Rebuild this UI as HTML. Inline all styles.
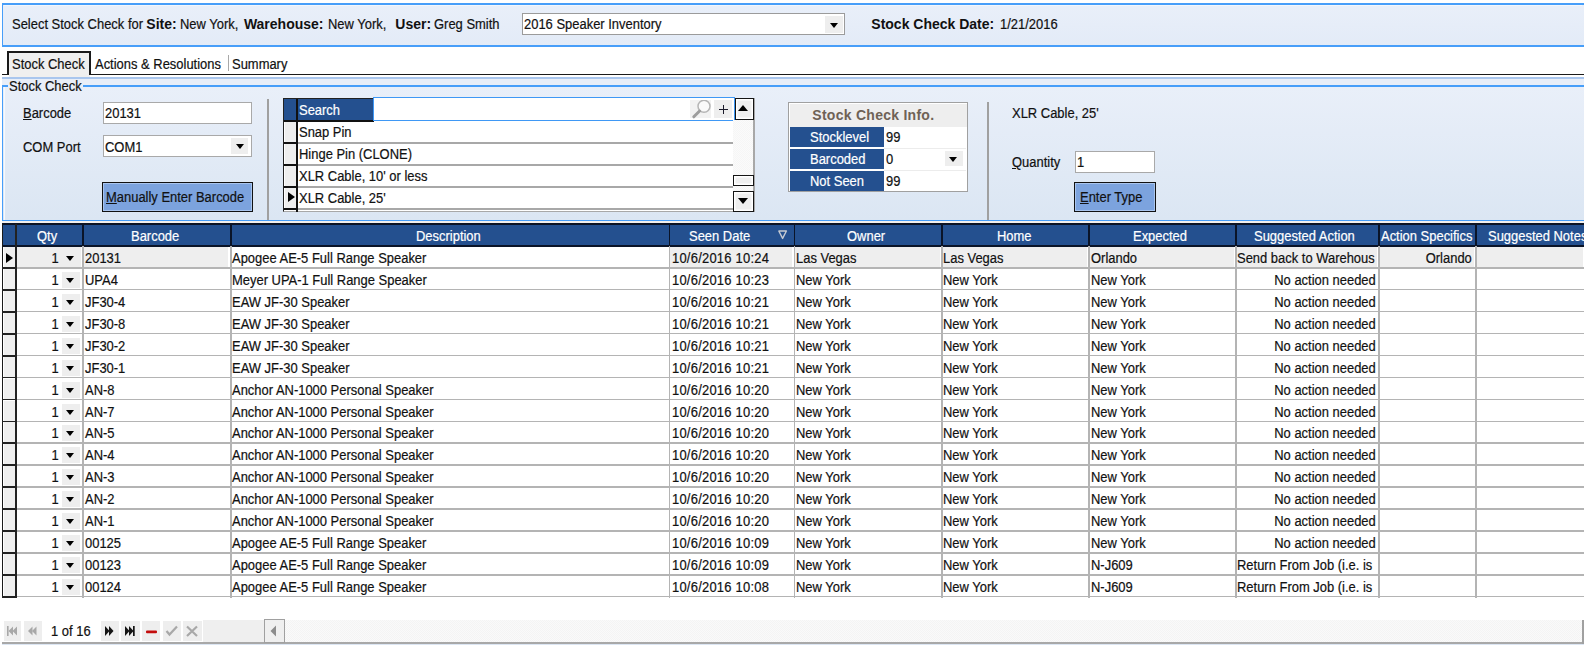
<!DOCTYPE html>
<html><head><meta charset="utf-8"><style>
*{margin:0;padding:0}
html,body{width:1586px;height:647px;overflow:hidden;background:#fff}
body>div,body>svg{position:absolute}
body{position:relative;font-family:"Liberation Sans",sans-serif;font-size:13px;color:#111}
.t,.tb{position:absolute;white-space:nowrap;line-height:15px;font-size:14px;-webkit-text-stroke-width:0.2px}
.t{transform:scaleX(0.925);transform-origin:0 0}
.t.r{transform-origin:100% 0}
.tb{font-weight:bold;font-size:14px;-webkit-text-stroke-width:0}
.u1::first-letter{text-decoration:underline}
</style></head><body>
<div style="left:2px;top:2.8px;width:1582px;height:44.5px;border:2px solid #479ef9;border-right:none;border-left-width:1.5px;box-sizing:border-box;background:linear-gradient(#e9eff9,#e3ebf7);"></div>
<div style="left:4px;top:5px;width:1578px;height:1px;background:#f4f7fc"></div>
<div class="t" style="left:11.9px;top:17px;">Select Stock Check for</div>
<div class="tb" style="left:146.3px;top:17px;">Site:</div>
<div class="t" style="left:180.3px;top:17px;">New York,</div>
<div class="tb" style="left:243.9px;top:17px;">Warehouse:</div>
<div class="t" style="left:328.3px;top:17px;">New York,</div>
<div class="tb" style="left:395.3px;top:17px;">User:</div>
<div class="t" style="left:434.3px;top:17px;">Greg Smith</div>
<div style="left:522px;top:13px;width:323px;height:22px;border:1.5px solid #9b9b9b;box-sizing:border-box;background:#fff"></div>
<div class="t" style="left:524.3px;top:17px;">2016 Speaker Inventory</div>
<div style="left:825px;top:16px;width:18px;height:17px;background:#eeeeee"></div>
<div style="left:830px;top:23px;width:0;height:0;border-left:4.5px solid transparent;border-right:4.5px solid transparent;border-top:5px solid #000"></div>
<div class="tb" style="left:871.3px;top:17px;">Stock Check Date:</div>
<div class="t" style="left:1000.3px;top:17px;">1/21/2016</div>
<div style="left:2px;top:73.6px;width:1582px;height:1.6px;background:#1a1a1a"></div>
<div style="left:7px;top:50.8px;width:84px;height:24.5px;border:2px solid #1a1a1a;border-bottom:none;box-sizing:border-box;background:#efefef"></div>
<div style="left:8.5px;top:75px;width:81px;height:2px;background:#efefef"></div>
<div class="t" style="left:11.8px;top:57px;">Stock Check</div>
<div class="t" style="left:94.8px;top:57px;">Actions &amp; Resolutions</div>
<div style="left:228px;top:55px;width:1px;height:16px;background:#a8a8a8"></div>
<div class="t" style="left:231.9px;top:57px;">Summary</div>
<div style="left:2px;top:77px;width:1582px;height:2px;background:#a9c6ee"></div>
<div style="left:2px;top:79px;width:1582px;height:145px;background:#e8eef8"></div>
<div style="left:2px;top:84.5px;width:1582px;height:136.5px;border:1.5px solid #479ef9;border-top-width:2px;border-right:none;box-sizing:border-box;background:linear-gradient(#e9eff9,#dbe6f3)"></div>
<div style="left:3.5px;top:86.5px;width:1px;height:133px;background:#f6f9fd"></div>
<div style="left:8px;top:82px;width:75px;height:8px;background:#e8eef8"></div>
<div class="t" style="left:9.3px;top:79px;">Stock Check</div>
<div class="t u1" style="left:22.8px;top:106px;">Barcode</div>
<div class="t" style="left:22.8px;top:140px;">COM Port</div>
<div style="left:103px;top:102px;width:149px;height:22px;border:1.5px solid #a9a9a9;box-sizing:border-box;background:#fff"></div>
<div class="t" style="left:105.3px;top:106px;">20131</div>
<div style="left:103px;top:135px;width:149px;height:22px;border:1.5px solid #a9a9a9;box-sizing:border-box;background:#fff"></div>
<div class="t" style="left:105.3px;top:140px;">COM1</div>
<div style="left:231px;top:138px;width:17px;height:16px;background:#eeeeee"></div>
<div style="left:236px;top:144px;width:0;height:0;border-left:4.5px solid transparent;border-right:4.5px solid transparent;border-top:5px solid #000"></div>
<div style="left:102px;top:182px;width:151px;height:30px;border:1.5px solid #111;box-sizing:border-box;background:#7ca3de;box-shadow:inset 0 0 0 1px #a9c5ee"></div>
<div class="t u1" style="left:106.3px;top:190px;">Manually Enter Barcode</div>
<div style="left:267px;top:99px;width:1.5px;height:121px;background:#a0a0a0"></div>
<div style="left:283px;top:98px;width:471px;height:114px;border:1.5px solid #222;border-bottom-color:#a8a8a8;box-sizing:border-box;background:#fff"></div>
<div style="left:284px;top:99px;width:13px;height:21px;background:#24508f"></div>
<div style="left:296px;top:99px;width:1.5px;height:113px;background:#111"></div>
<div style="left:298px;top:99px;width:75px;height:21px;background:#24508f"></div>
<div style="left:284px;top:120px;width:90px;height:1.5px;background:#111"></div>
<div class="t" style="left:298.9px;top:103px;color:#fff">Search</div>
<div style="left:373px;top:97px;width:361.5px;height:24px;border:1.5px solid #3f98f5;box-sizing:border-box;background:#fff"></div>
<div style="left:690px;top:100px;width:21px;height:18px;background:#f2f2f2"></div>
<svg style="left:690px;top:100px" width="22" height="19" viewBox="0 0 22 19"><circle cx="14" cy="6.3" r="6" fill="#fafafa" stroke="#b5b5b5" stroke-width="1.5"/><line x1="9.6" y1="11" x2="3.8" y2="16.8" stroke="#9d9d9d" stroke-width="3" stroke-linecap="round"/></svg>
<div style="left:714px;top:100px;width:18px;height:18px;background:#eeeeee"></div>
<div style="left:719px;top:109px;width:9px;height:1.4px;background:#1a1a2a"></div>
<div style="left:723px;top:105px;width:1.4px;height:9px;background:#1a1a2a"></div>
<div style="left:284.5px;top:122px;width:11.5px;height:20px;background:#eeeeee"></div>
<div style="left:284px;top:142px;width:13px;height:1.5px;background:#111"></div>
<div style="left:298px;top:142px;width:435px;height:1.5px;background:#a8a8a8"></div>
<div class="t" style="left:298.9px;top:125px;">Snap Pin</div>
<div style="left:284.5px;top:144px;width:11.5px;height:20px;background:#eeeeee"></div>
<div style="left:284px;top:164px;width:13px;height:1.5px;background:#111"></div>
<div style="left:298px;top:164px;width:435px;height:1.5px;background:#a8a8a8"></div>
<div class="t" style="left:298.9px;top:147px;">Hinge Pin (CLONE)</div>
<div style="left:284.5px;top:166px;width:11.5px;height:20px;background:#eeeeee"></div>
<div style="left:284px;top:186px;width:13px;height:1.5px;background:#111"></div>
<div style="left:298px;top:186px;width:435px;height:1.5px;background:#a8a8a8"></div>
<div class="t" style="left:298.9px;top:169px;">XLR Cable, 10&#x27; or less</div>
<div style="left:284.5px;top:188px;width:11.5px;height:20px;background:#eeeeee"></div>
<div style="left:284px;top:208px;width:13px;height:1.5px;background:#111"></div>
<div style="left:298px;top:208px;width:435px;height:1.5px;background:#a8a8a8"></div>
<div class="t" style="left:298.9px;top:191px;">XLR Cable, 25&#x27;</div>
<div style="left:288px;top:192px;width:0;height:0;border-top:5.5px solid transparent;border-bottom:5.5px solid transparent;border-left:7px solid #000"></div>
<div style="left:733px;top:120px;width:21px;height:71px;background:repeating-conic-gradient(#f6f6f6 0 25%,#fbfbfb 0 50%) 0 0/2px 2px"></div>
<div style="left:753px;top:98px;width:1.5px;height:114px;background:#a8a8a8"></div>
<div style="left:734.5px;top:98px;width:19.5px;height:21.5px;border:1.5px solid #151515;box-sizing:border-box;background:#efefef;box-shadow:inset 0 0 0 1.5px #fff"></div>
<div style="left:737.5px;top:105px;width:0;height:0;border-left:5.5px solid transparent;border-right:5.5px solid transparent;border-bottom:6.5px solid #000"></div>
<div style="left:733px;top:175px;width:20.5px;height:10.5px;border:1.5px solid #151515;box-sizing:border-box;background:#efefef;box-shadow:inset 0 0 0 1.5px #fff"></div>
<div style="left:733px;top:191px;width:20.5px;height:21px;border:1.5px solid #151515;box-sizing:border-box;background:#efefef;box-shadow:inset 0 0 0 1.5px #fff"></div>
<div style="left:737.5px;top:197.5px;width:0;height:0;border-left:5.5px solid transparent;border-right:5.5px solid transparent;border-top:6.5px solid #000"></div>
<div style="left:788px;top:102px;width:180px;height:90px;border:1.5px solid #a0a0a0;box-sizing:border-box;background:#fff"></div>
<div style="left:789.5px;top:103.5px;width:177px;height:23px;background:#eeeeee"></div>
<div class="tb" style="left:812.3px;top:108px;color:#6e6256;letter-spacing:0.27px">Stock Check Info.</div>
<div style="left:790px;top:127px;width:94px;height:19.5px;background:#24508f"></div>
<div class="t" style="left:810.3px;top:129.5px;color:#fff">Stocklevel</div>
<div class="t" style="left:886.3px;top:129.5px;">99</div>
<div style="left:884px;top:147.5px;width:82px;height:1px;background:#ececec"></div>
<div style="left:790px;top:149px;width:94px;height:19.5px;background:#24508f"></div>
<div class="t" style="left:810.3px;top:151.5px;color:#fff">Barcoded</div>
<div class="t" style="left:886.3px;top:151.5px;">0</div>
<div style="left:884px;top:169.5px;width:82px;height:1px;background:#ececec"></div>
<div style="left:790px;top:171px;width:94px;height:19.5px;background:#24508f"></div>
<div class="t" style="left:810.3px;top:173.5px;color:#fff">Not Seen</div>
<div class="t" style="left:886.3px;top:173.5px;">99</div>
<div style="left:945px;top:151px;width:18px;height:15px;background:#eeeeee"></div>
<div style="left:949px;top:156.5px;width:0;height:0;border-left:4.5px solid transparent;border-right:4.5px solid transparent;border-top:5px solid #000"></div>
<div style="left:987px;top:102px;width:1.5px;height:118px;background:#a0a0a0"></div>
<div class="t" style="left:1011.9px;top:106px;">XLR Cable, 25&#x27;</div>
<div class="t u1" style="left:1011.9px;top:155px;">Quantity</div>
<div style="left:1075px;top:151px;width:80px;height:22px;border:1.5px solid #a9a9a9;box-sizing:border-box;background:#fff"></div>
<div class="t" style="left:1077.3px;top:155px;">1</div>
<div style="left:1074px;top:182px;width:82px;height:30px;border:1.5px solid #111;box-sizing:border-box;background:#7ca3de;box-shadow:inset 0 0 0 1px #a9c5ee"></div>
<div class="t u1" style="left:1080.3px;top:190px;">Enter Type</div>
<div style="left:2px;top:221px;width:1582px;height:2px;background:#f2f0ee"></div>
<div style="left:2px;top:224px;width:1582px;height:373.5px;background:#fff"></div>
<div style="left:2px;top:223px;width:1582px;height:2px;background:#0c1426"></div>
<div style="left:2px;top:225px;width:1582px;height:20px;background:#24508f"></div>
<div style="left:2px;top:245px;width:1582px;height:1.8px;background:#0a1428"></div>
<div style="left:2px;top:224px;width:1.3px;height:373.5px;background:#1a1a1a"></div>
<div style="left:15px;top:224px;width:1.8px;height:373.5px;background:#222"></div>
<div style="left:82px;top:224px;width:1.8px;height:22px;background:#0a1428"></div>
<div style="left:82px;top:246px;width:1.5px;height:351.5px;background:#b4b4b4"></div>
<div style="left:230px;top:224px;width:1.8px;height:22px;background:#0a1428"></div>
<div style="left:230px;top:246px;width:1.5px;height:351.5px;background:#b4b4b4"></div>
<div style="left:668.5px;top:224px;width:1.8px;height:22px;background:#0a1428"></div>
<div style="left:668.5px;top:246px;width:1.5px;height:351.5px;background:#b4b4b4"></div>
<div style="left:793.5px;top:224px;width:1.8px;height:22px;background:#0a1428"></div>
<div style="left:793.5px;top:246px;width:1.5px;height:351.5px;background:#b4b4b4"></div>
<div style="left:941px;top:224px;width:1.8px;height:22px;background:#0a1428"></div>
<div style="left:941px;top:246px;width:1.5px;height:351.5px;background:#b4b4b4"></div>
<div style="left:1088px;top:224px;width:1.8px;height:22px;background:#0a1428"></div>
<div style="left:1088px;top:246px;width:1.5px;height:351.5px;background:#b4b4b4"></div>
<div style="left:1235px;top:224px;width:1.8px;height:22px;background:#0a1428"></div>
<div style="left:1235px;top:246px;width:1.5px;height:351.5px;background:#b4b4b4"></div>
<div style="left:1378px;top:224px;width:1.8px;height:22px;background:#0a1428"></div>
<div style="left:1378px;top:246px;width:1.5px;height:351.5px;background:#b4b4b4"></div>
<div style="left:1475px;top:224px;width:1.8px;height:22px;background:#0a1428"></div>
<div style="left:1475px;top:246px;width:1.5px;height:351.5px;background:#b4b4b4"></div>
<div class="t" style="left:37.0px;top:228.5px;color:#fff">Qty</div>
<div class="t" style="left:131.2px;top:228.5px;color:#fff">Barcode</div>
<div class="t" style="left:416.0px;top:228.5px;color:#fff">Description</div>
<div class="t" style="left:847.3px;top:228.5px;color:#fff">Owner</div>
<div class="t" style="left:997.0px;top:228.5px;color:#fff">Home</div>
<div class="t" style="left:1133.2px;top:228.5px;color:#fff">Expected</div>
<div class="t" style="left:1254.2px;top:228.5px;color:#fff">Suggested Action</div>
<div class="t" style="left:689.3px;top:228.5px;color:#fff">Seen Date</div>
<svg style="left:777px;top:229px" width="11" height="11" viewBox="0 0 11 11"><path d="M1.8 2 L9.4 2 L5.6 9.4 Z" fill="none" stroke="#c5cad2" stroke-width="1.4" stroke-linejoin="round"/></svg>
<div class="t" style="left:1381.3px;top:228.5px;color:#fff">Action Specifics</div>
<div class="t" style="left:1488.3px;top:228.5px;color:#fff">Suggested Notes</div>
<div style="left:17px;top:247.0px;width:64px;height:20px;background:#eeeeee"></div>
<div style="left:84px;top:247.0px;width:144px;height:20px;background:#eeeeee"></div>
<div style="left:670px;top:247.0px;width:122px;height:20px;background:#eeeeee"></div>
<div style="left:795px;top:247.0px;width:145px;height:20px;background:#eeeeee"></div>
<div style="left:943px;top:247.0px;width:144px;height:20px;background:#eeeeee"></div>
<div style="left:1090px;top:247.0px;width:144px;height:20px;background:#eeeeee"></div>
<div style="left:1237px;top:247.0px;width:140px;height:20px;background:#eeeeee"></div>
<div style="left:1380px;top:247.0px;width:94px;height:20px;background:#eeeeee"></div>
<div style="left:1477px;top:247.0px;width:106px;height:20px;background:#eeeeee"></div>
<div style="left:3.5px;top:247.0px;width:11.5px;height:20.5px;background:#efefef"></div>
<div style="left:2px;top:267.0px;width:14px;height:1.8px;background:#222"></div>
<div style="left:17px;top:267.0px;width:1567px;height:1.5px;background:#b4b4b4"></div>
<div class="t r" style="right:1527.5px;top:251.0px;">1</div>
<div style="left:66px;top:256.0px;width:0;height:0;border-left:4.5px solid transparent;border-right:4.5px solid transparent;border-top:5px solid #000"></div>
<div class="t" style="left:85.3px;top:251.0px;">20131</div>
<div class="t" style="left:232.3px;top:251.0px;">Apogee AE-5 Full Range Speaker</div>
<div class="t" style="left:672.3px;top:251.0px;letter-spacing:0.25px">10/6/2016 10:24</div>
<div class="t" style="left:795.8px;top:251.0px;">Las Vegas</div>
<div class="t" style="left:942.8px;top:251.0px;">Las Vegas</div>
<div class="t" style="left:1091.3px;top:251.0px;">Orlando</div>
<div class="t" style="left:1237.3px;width:149px;overflow:hidden;top:251.0px">Send back to Warehous</div>
<div class="t r" style="right:114px;top:251.0px;">Orlando</div>
<div style="left:3.5px;top:268.93px;width:11.5px;height:20.5px;background:#efefef"></div>
<div style="left:2px;top:288.93px;width:14px;height:1.8px;background:#222"></div>
<div style="left:17px;top:288.93px;width:1567px;height:1.5px;background:#b4b4b4"></div>
<div class="t r" style="right:1527.5px;top:272.93px;">1</div>
<div style="left:62px;top:271.93px;width:18px;height:16px;background:#eeeeee"></div>
<div style="left:66px;top:277.93px;width:0;height:0;border-left:4.5px solid transparent;border-right:4.5px solid transparent;border-top:5px solid #000"></div>
<div class="t" style="left:85.3px;top:272.93px;">UPA4</div>
<div class="t" style="left:232.3px;top:272.93px;">Meyer UPA-1 Full Range Speaker</div>
<div class="t" style="left:672.3px;top:272.93px;letter-spacing:0.25px">10/6/2016 10:23</div>
<div class="t" style="left:795.8px;top:272.93px;">New York</div>
<div class="t" style="left:942.8px;top:272.93px;">New York</div>
<div class="t" style="left:1091.3px;top:272.93px;">New York</div>
<div class="t r" style="right:210.5px;top:272.93px;">No action needed</div>
<div style="left:3.5px;top:290.86px;width:11.5px;height:20.5px;background:#efefef"></div>
<div style="left:2px;top:310.86px;width:14px;height:1.8px;background:#222"></div>
<div style="left:17px;top:310.86px;width:1567px;height:1.5px;background:#b4b4b4"></div>
<div class="t r" style="right:1527.5px;top:294.86px;">1</div>
<div style="left:62px;top:293.86px;width:18px;height:16px;background:#eeeeee"></div>
<div style="left:66px;top:299.86px;width:0;height:0;border-left:4.5px solid transparent;border-right:4.5px solid transparent;border-top:5px solid #000"></div>
<div class="t" style="left:85.3px;top:294.86px;">JF30-4</div>
<div class="t" style="left:232.3px;top:294.86px;">EAW JF-30 Speaker</div>
<div class="t" style="left:672.3px;top:294.86px;letter-spacing:0.25px">10/6/2016 10:21</div>
<div class="t" style="left:795.8px;top:294.86px;">New York</div>
<div class="t" style="left:942.8px;top:294.86px;">New York</div>
<div class="t" style="left:1091.3px;top:294.86px;">New York</div>
<div class="t r" style="right:210.5px;top:294.86px;">No action needed</div>
<div style="left:3.5px;top:312.79px;width:11.5px;height:20.5px;background:#efefef"></div>
<div style="left:2px;top:332.79px;width:14px;height:1.8px;background:#222"></div>
<div style="left:17px;top:332.79px;width:1567px;height:1.5px;background:#b4b4b4"></div>
<div class="t r" style="right:1527.5px;top:316.79px;">1</div>
<div style="left:62px;top:315.79px;width:18px;height:16px;background:#eeeeee"></div>
<div style="left:66px;top:321.79px;width:0;height:0;border-left:4.5px solid transparent;border-right:4.5px solid transparent;border-top:5px solid #000"></div>
<div class="t" style="left:85.3px;top:316.79px;">JF30-8</div>
<div class="t" style="left:232.3px;top:316.79px;">EAW JF-30 Speaker</div>
<div class="t" style="left:672.3px;top:316.79px;letter-spacing:0.25px">10/6/2016 10:21</div>
<div class="t" style="left:795.8px;top:316.79px;">New York</div>
<div class="t" style="left:942.8px;top:316.79px;">New York</div>
<div class="t" style="left:1091.3px;top:316.79px;">New York</div>
<div class="t r" style="right:210.5px;top:316.79px;">No action needed</div>
<div style="left:3.5px;top:334.72px;width:11.5px;height:20.5px;background:#efefef"></div>
<div style="left:2px;top:354.72px;width:14px;height:1.8px;background:#222"></div>
<div style="left:17px;top:354.72px;width:1567px;height:1.5px;background:#b4b4b4"></div>
<div class="t r" style="right:1527.5px;top:338.72px;">1</div>
<div style="left:62px;top:337.72px;width:18px;height:16px;background:#eeeeee"></div>
<div style="left:66px;top:343.72px;width:0;height:0;border-left:4.5px solid transparent;border-right:4.5px solid transparent;border-top:5px solid #000"></div>
<div class="t" style="left:85.3px;top:338.72px;">JF30-2</div>
<div class="t" style="left:232.3px;top:338.72px;">EAW JF-30 Speaker</div>
<div class="t" style="left:672.3px;top:338.72px;letter-spacing:0.25px">10/6/2016 10:21</div>
<div class="t" style="left:795.8px;top:338.72px;">New York</div>
<div class="t" style="left:942.8px;top:338.72px;">New York</div>
<div class="t" style="left:1091.3px;top:338.72px;">New York</div>
<div class="t r" style="right:210.5px;top:338.72px;">No action needed</div>
<div style="left:3.5px;top:356.65px;width:11.5px;height:20.5px;background:#efefef"></div>
<div style="left:2px;top:376.65px;width:14px;height:1.8px;background:#222"></div>
<div style="left:17px;top:376.65px;width:1567px;height:1.5px;background:#b4b4b4"></div>
<div class="t r" style="right:1527.5px;top:360.65px;">1</div>
<div style="left:62px;top:359.65px;width:18px;height:16px;background:#eeeeee"></div>
<div style="left:66px;top:365.65px;width:0;height:0;border-left:4.5px solid transparent;border-right:4.5px solid transparent;border-top:5px solid #000"></div>
<div class="t" style="left:85.3px;top:360.65px;">JF30-1</div>
<div class="t" style="left:232.3px;top:360.65px;">EAW JF-30 Speaker</div>
<div class="t" style="left:672.3px;top:360.65px;letter-spacing:0.25px">10/6/2016 10:21</div>
<div class="t" style="left:795.8px;top:360.65px;">New York</div>
<div class="t" style="left:942.8px;top:360.65px;">New York</div>
<div class="t" style="left:1091.3px;top:360.65px;">New York</div>
<div class="t r" style="right:210.5px;top:360.65px;">No action needed</div>
<div style="left:3.5px;top:378.58px;width:11.5px;height:20.5px;background:#efefef"></div>
<div style="left:2px;top:398.58px;width:14px;height:1.8px;background:#222"></div>
<div style="left:17px;top:398.58px;width:1567px;height:1.5px;background:#b4b4b4"></div>
<div class="t r" style="right:1527.5px;top:382.58px;">1</div>
<div style="left:62px;top:381.58px;width:18px;height:16px;background:#eeeeee"></div>
<div style="left:66px;top:387.58px;width:0;height:0;border-left:4.5px solid transparent;border-right:4.5px solid transparent;border-top:5px solid #000"></div>
<div class="t" style="left:85.3px;top:382.58px;">AN-8</div>
<div class="t" style="left:232.3px;top:382.58px;">Anchor AN-1000 Personal Speaker</div>
<div class="t" style="left:672.3px;top:382.58px;letter-spacing:0.25px">10/6/2016 10:20</div>
<div class="t" style="left:795.8px;top:382.58px;">New York</div>
<div class="t" style="left:942.8px;top:382.58px;">New York</div>
<div class="t" style="left:1091.3px;top:382.58px;">New York</div>
<div class="t r" style="right:210.5px;top:382.58px;">No action needed</div>
<div style="left:3.5px;top:400.51px;width:11.5px;height:20.5px;background:#efefef"></div>
<div style="left:2px;top:420.51px;width:14px;height:1.8px;background:#222"></div>
<div style="left:17px;top:420.51px;width:1567px;height:1.5px;background:#b4b4b4"></div>
<div class="t r" style="right:1527.5px;top:404.51px;">1</div>
<div style="left:62px;top:403.51px;width:18px;height:16px;background:#eeeeee"></div>
<div style="left:66px;top:409.51px;width:0;height:0;border-left:4.5px solid transparent;border-right:4.5px solid transparent;border-top:5px solid #000"></div>
<div class="t" style="left:85.3px;top:404.51px;">AN-7</div>
<div class="t" style="left:232.3px;top:404.51px;">Anchor AN-1000 Personal Speaker</div>
<div class="t" style="left:672.3px;top:404.51px;letter-spacing:0.25px">10/6/2016 10:20</div>
<div class="t" style="left:795.8px;top:404.51px;">New York</div>
<div class="t" style="left:942.8px;top:404.51px;">New York</div>
<div class="t" style="left:1091.3px;top:404.51px;">New York</div>
<div class="t r" style="right:210.5px;top:404.51px;">No action needed</div>
<div style="left:3.5px;top:422.44px;width:11.5px;height:20.5px;background:#efefef"></div>
<div style="left:2px;top:442.44px;width:14px;height:1.8px;background:#222"></div>
<div style="left:17px;top:442.44px;width:1567px;height:1.5px;background:#b4b4b4"></div>
<div class="t r" style="right:1527.5px;top:426.44px;">1</div>
<div style="left:62px;top:425.44px;width:18px;height:16px;background:#eeeeee"></div>
<div style="left:66px;top:431.44px;width:0;height:0;border-left:4.5px solid transparent;border-right:4.5px solid transparent;border-top:5px solid #000"></div>
<div class="t" style="left:85.3px;top:426.44px;">AN-5</div>
<div class="t" style="left:232.3px;top:426.44px;">Anchor AN-1000 Personal Speaker</div>
<div class="t" style="left:672.3px;top:426.44px;letter-spacing:0.25px">10/6/2016 10:20</div>
<div class="t" style="left:795.8px;top:426.44px;">New York</div>
<div class="t" style="left:942.8px;top:426.44px;">New York</div>
<div class="t" style="left:1091.3px;top:426.44px;">New York</div>
<div class="t r" style="right:210.5px;top:426.44px;">No action needed</div>
<div style="left:3.5px;top:444.37px;width:11.5px;height:20.5px;background:#efefef"></div>
<div style="left:2px;top:464.37px;width:14px;height:1.8px;background:#222"></div>
<div style="left:17px;top:464.37px;width:1567px;height:1.5px;background:#b4b4b4"></div>
<div class="t r" style="right:1527.5px;top:448.37px;">1</div>
<div style="left:62px;top:447.37px;width:18px;height:16px;background:#eeeeee"></div>
<div style="left:66px;top:453.37px;width:0;height:0;border-left:4.5px solid transparent;border-right:4.5px solid transparent;border-top:5px solid #000"></div>
<div class="t" style="left:85.3px;top:448.37px;">AN-4</div>
<div class="t" style="left:232.3px;top:448.37px;">Anchor AN-1000 Personal Speaker</div>
<div class="t" style="left:672.3px;top:448.37px;letter-spacing:0.25px">10/6/2016 10:20</div>
<div class="t" style="left:795.8px;top:448.37px;">New York</div>
<div class="t" style="left:942.8px;top:448.37px;">New York</div>
<div class="t" style="left:1091.3px;top:448.37px;">New York</div>
<div class="t r" style="right:210.5px;top:448.37px;">No action needed</div>
<div style="left:3.5px;top:466.3px;width:11.5px;height:20.5px;background:#efefef"></div>
<div style="left:2px;top:486.3px;width:14px;height:1.8px;background:#222"></div>
<div style="left:17px;top:486.3px;width:1567px;height:1.5px;background:#b4b4b4"></div>
<div class="t r" style="right:1527.5px;top:470.3px;">1</div>
<div style="left:62px;top:469.3px;width:18px;height:16px;background:#eeeeee"></div>
<div style="left:66px;top:475.3px;width:0;height:0;border-left:4.5px solid transparent;border-right:4.5px solid transparent;border-top:5px solid #000"></div>
<div class="t" style="left:85.3px;top:470.3px;">AN-3</div>
<div class="t" style="left:232.3px;top:470.3px;">Anchor AN-1000 Personal Speaker</div>
<div class="t" style="left:672.3px;top:470.3px;letter-spacing:0.25px">10/6/2016 10:20</div>
<div class="t" style="left:795.8px;top:470.3px;">New York</div>
<div class="t" style="left:942.8px;top:470.3px;">New York</div>
<div class="t" style="left:1091.3px;top:470.3px;">New York</div>
<div class="t r" style="right:210.5px;top:470.3px;">No action needed</div>
<div style="left:3.5px;top:488.23px;width:11.5px;height:20.5px;background:#efefef"></div>
<div style="left:2px;top:508.23px;width:14px;height:1.8px;background:#222"></div>
<div style="left:17px;top:508.23px;width:1567px;height:1.5px;background:#b4b4b4"></div>
<div class="t r" style="right:1527.5px;top:492.23px;">1</div>
<div style="left:62px;top:491.23px;width:18px;height:16px;background:#eeeeee"></div>
<div style="left:66px;top:497.23px;width:0;height:0;border-left:4.5px solid transparent;border-right:4.5px solid transparent;border-top:5px solid #000"></div>
<div class="t" style="left:85.3px;top:492.23px;">AN-2</div>
<div class="t" style="left:232.3px;top:492.23px;">Anchor AN-1000 Personal Speaker</div>
<div class="t" style="left:672.3px;top:492.23px;letter-spacing:0.25px">10/6/2016 10:20</div>
<div class="t" style="left:795.8px;top:492.23px;">New York</div>
<div class="t" style="left:942.8px;top:492.23px;">New York</div>
<div class="t" style="left:1091.3px;top:492.23px;">New York</div>
<div class="t r" style="right:210.5px;top:492.23px;">No action needed</div>
<div style="left:3.5px;top:510.16px;width:11.5px;height:20.5px;background:#efefef"></div>
<div style="left:2px;top:530.1600000000001px;width:14px;height:1.8px;background:#222"></div>
<div style="left:17px;top:530.1600000000001px;width:1567px;height:1.5px;background:#b4b4b4"></div>
<div class="t r" style="right:1527.5px;top:514.16px;">1</div>
<div style="left:62px;top:513.1600000000001px;width:18px;height:16px;background:#eeeeee"></div>
<div style="left:66px;top:519.1600000000001px;width:0;height:0;border-left:4.5px solid transparent;border-right:4.5px solid transparent;border-top:5px solid #000"></div>
<div class="t" style="left:85.3px;top:514.16px;">AN-1</div>
<div class="t" style="left:232.3px;top:514.16px;">Anchor AN-1000 Personal Speaker</div>
<div class="t" style="left:672.3px;top:514.16px;letter-spacing:0.25px">10/6/2016 10:20</div>
<div class="t" style="left:795.8px;top:514.16px;">New York</div>
<div class="t" style="left:942.8px;top:514.16px;">New York</div>
<div class="t" style="left:1091.3px;top:514.16px;">New York</div>
<div class="t r" style="right:210.5px;top:514.16px;">No action needed</div>
<div style="left:3.5px;top:532.09px;width:11.5px;height:20.5px;background:#efefef"></div>
<div style="left:2px;top:552.09px;width:14px;height:1.8px;background:#222"></div>
<div style="left:17px;top:552.09px;width:1567px;height:1.5px;background:#b4b4b4"></div>
<div class="t r" style="right:1527.5px;top:536.09px;">1</div>
<div style="left:62px;top:535.09px;width:18px;height:16px;background:#eeeeee"></div>
<div style="left:66px;top:541.09px;width:0;height:0;border-left:4.5px solid transparent;border-right:4.5px solid transparent;border-top:5px solid #000"></div>
<div class="t" style="left:85.3px;top:536.09px;">00125</div>
<div class="t" style="left:232.3px;top:536.09px;">Apogee AE-5 Full Range Speaker</div>
<div class="t" style="left:672.3px;top:536.09px;letter-spacing:0.25px">10/6/2016 10:09</div>
<div class="t" style="left:795.8px;top:536.09px;">New York</div>
<div class="t" style="left:942.8px;top:536.09px;">New York</div>
<div class="t" style="left:1091.3px;top:536.09px;">New York</div>
<div class="t r" style="right:210.5px;top:536.09px;">No action needed</div>
<div style="left:3.5px;top:554.02px;width:11.5px;height:20.5px;background:#efefef"></div>
<div style="left:2px;top:574.02px;width:14px;height:1.8px;background:#222"></div>
<div style="left:17px;top:574.02px;width:1567px;height:1.5px;background:#b4b4b4"></div>
<div class="t r" style="right:1527.5px;top:558.02px;">1</div>
<div style="left:62px;top:557.02px;width:18px;height:16px;background:#eeeeee"></div>
<div style="left:66px;top:563.02px;width:0;height:0;border-left:4.5px solid transparent;border-right:4.5px solid transparent;border-top:5px solid #000"></div>
<div class="t" style="left:85.3px;top:558.02px;">00123</div>
<div class="t" style="left:232.3px;top:558.02px;">Apogee AE-5 Full Range Speaker</div>
<div class="t" style="left:672.3px;top:558.02px;letter-spacing:0.25px">10/6/2016 10:09</div>
<div class="t" style="left:795.8px;top:558.02px;">New York</div>
<div class="t" style="left:942.8px;top:558.02px;">New York</div>
<div class="t" style="left:1091.3px;top:558.02px;">N-J609</div>
<div class="t" style="left:1237.3px;width:149px;overflow:hidden;top:558.02px">Return From Job (i.e. is</div>
<div style="left:3.5px;top:575.95px;width:11.5px;height:20.5px;background:#efefef"></div>
<div style="left:2px;top:595.95px;width:14px;height:1.8px;background:#222"></div>
<div style="left:17px;top:595.95px;width:1567px;height:1.5px;background:#b4b4b4"></div>
<div class="t r" style="right:1527.5px;top:579.95px;">1</div>
<div style="left:62px;top:578.95px;width:18px;height:16px;background:#eeeeee"></div>
<div style="left:66px;top:584.95px;width:0;height:0;border-left:4.5px solid transparent;border-right:4.5px solid transparent;border-top:5px solid #000"></div>
<div class="t" style="left:85.3px;top:579.95px;">00124</div>
<div class="t" style="left:232.3px;top:579.95px;">Apogee AE-5 Full Range Speaker</div>
<div class="t" style="left:672.3px;top:579.95px;letter-spacing:0.25px">10/6/2016 10:08</div>
<div class="t" style="left:795.8px;top:579.95px;">New York</div>
<div class="t" style="left:942.8px;top:579.95px;">New York</div>
<div class="t" style="left:1091.3px;top:579.95px;">N-J609</div>
<div class="t" style="left:1237.3px;width:149px;overflow:hidden;top:579.95px">Return From Job (i.e. is</div>
<div style="left:6.2px;top:252.5px;width:0;height:0;border-top:5.2px solid transparent;border-bottom:5.2px solid transparent;border-left:7px solid #000"></div>
<div style="left:2px;top:642px;width:1582px;height:1.5px;background:#a8a8a8"></div>
<div style="left:2px;top:643.5px;width:1582px;height:1px;background:#dce6f3"></div>
<div style="left:4px;top:621px;width:17px;height:19.5px;background:#eeeeee"></div>
<div style="left:24px;top:621px;width:18px;height:19.5px;background:#eeeeee"></div>
<div style="left:101px;top:621px;width:18px;height:19.5px;background:#eeeeee"></div>
<div style="left:121px;top:621px;width:18.5px;height:19.5px;background:#eeeeee"></div>
<div style="left:142px;top:621px;width:18px;height:19.5px;background:#eeeeee"></div>
<div style="left:163px;top:621px;width:18px;height:19.5px;background:#eeeeee"></div>
<div style="left:183px;top:621px;width:18.5px;height:19.5px;background:#eeeeee"></div>
<div class="t" style="left:51.1px;top:624px;">1 of 16</div>
<div style="left:203px;top:620px;width:61px;height:22px;background:#efefef"></div>
<div style="left:264px;top:619px;width:20.5px;height:24px;border:1.5px solid #a0a0a0;box-sizing:border-box;background:#efefef"></div>
<svg style="left:268px;top:624px" width="12" height="14" viewBox="0 0 12 14"><path d="M8 1.5 L8 12.5 L2.5 7 Z" fill="#8c8c8c"/></svg>
<div style="left:284.5px;top:620px;width:1297.5px;height:22px;background:repeating-conic-gradient(#f4f4f4 0 25%,#fafafa 0 50%) 0 0/2px 2px"></div>
<div style="left:1582px;top:619.5px;width:1.5px;height:24px;background:#a0a0a0"></div>
<svg style="left:0px;top:620px" width="210" height="26" viewBox="0 0 210 26">
<g fill="#a8a8a8"><rect x="7" y="6" width="1.6" height="10"/><path d="M8.5 11 L13 6.5 L13 15.5 Z"/><path d="M12.5 11 L17 6.5 L17 15.5 Z"/>
<path d="M28 11 L32.5 6.5 L32.5 15.5 Z"/><path d="M32 11 L36.5 6.5 L36.5 15.5 Z"/></g>
<g fill="#151515"><path d="M105 6 L109.5 11 L105 16 Z"/><path d="M109 6 L113.5 11 L109 16 Z"/>
<path d="M125 6 L129.5 11 L125 16 Z"/><path d="M129 6 L133.5 11 L129 16 Z"/><rect x="133" y="6" width="1.7" height="10"/></g>
<rect x="146" y="10.5" width="11" height="2.8" rx="1" fill="#c30d0d"/>
<path d="M166.5 11 L169.5 14.5 L177 6.5" fill="none" stroke="#a8a8a8" stroke-width="2.2"/>
<path d="M187 6.5 L197 16 M197 6.5 L187 16" fill="none" stroke="#a8a8a8" stroke-width="2.2"/>
</svg>
<div style="left:1584px;top:0px;width:2px;height:647px;background:#fff"></div>
</body></html>
